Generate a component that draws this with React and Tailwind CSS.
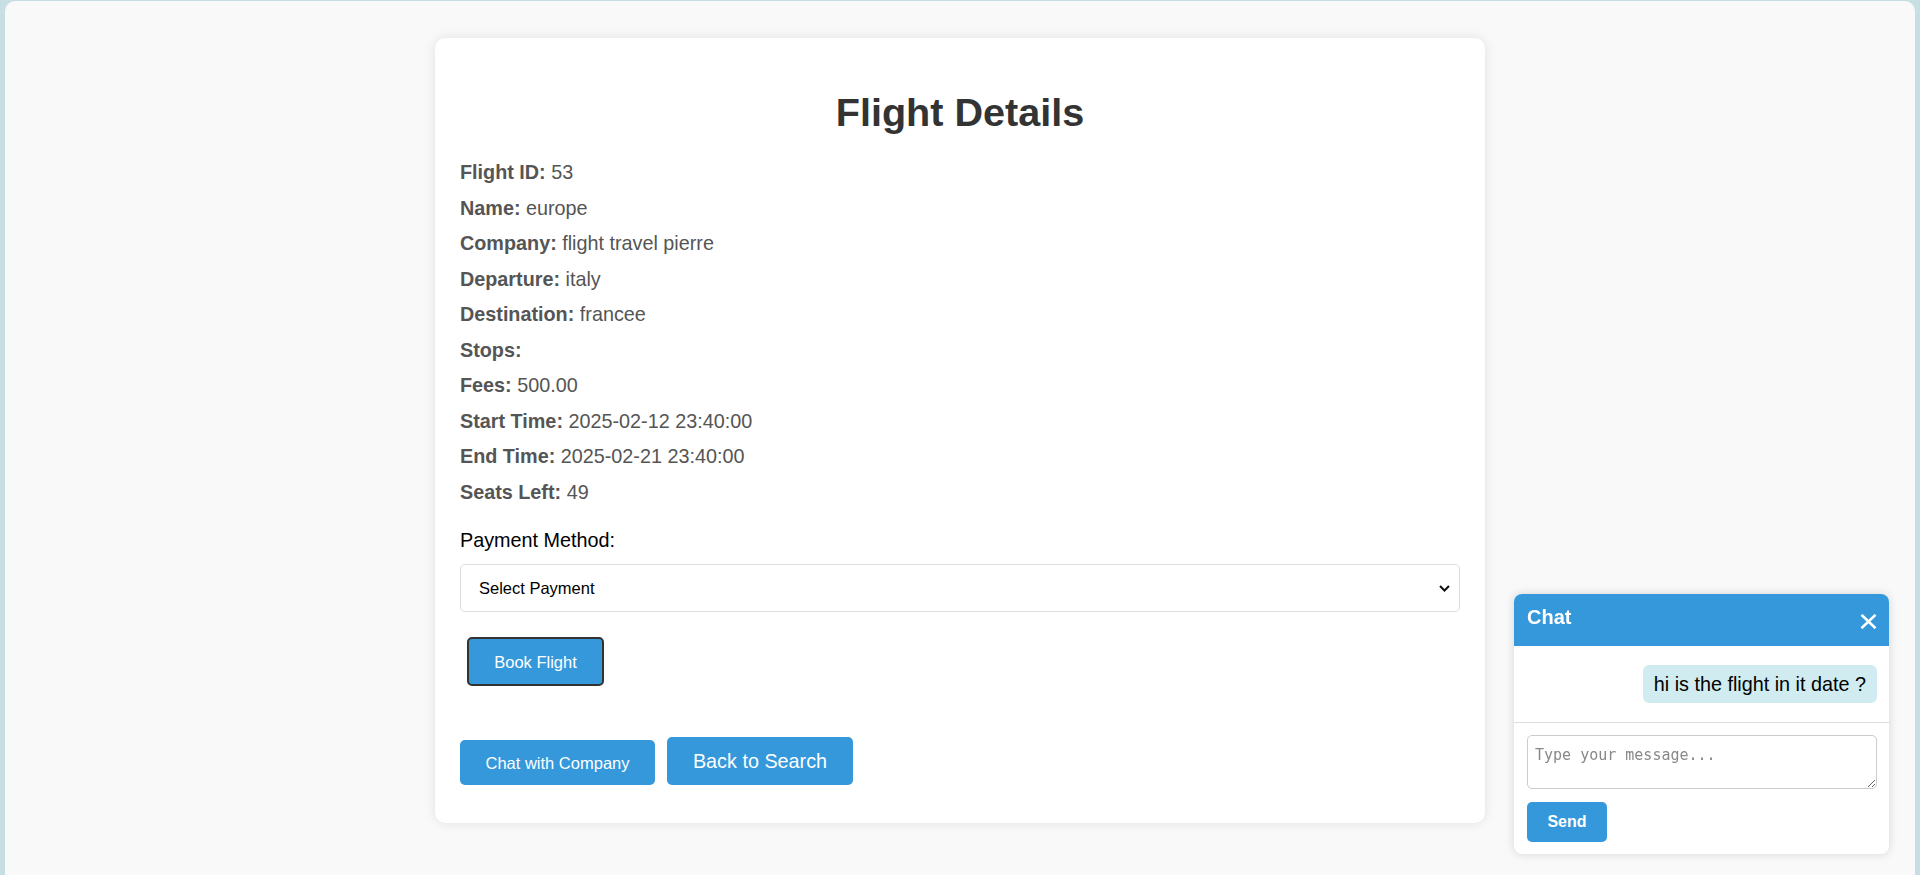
import React from 'react';

const DETAILS = [
  ['Flight ID:', '53'],
  ['Name:', 'europe'],
  ['Company:', 'flight travel pierre'],
  ['Departure:', 'italy'],
  ['Destination:', 'francee'],
  ['Stops:', ''],
  ['Fees:', '500.00'],
  ['Start Time:', '2025-02-12 23:40:00'],
  ['End Time:', '2025-02-21 23:40:00'],
  ['Seats Left:', '49'],
];

function ChatBox() {
  return (
    <div className="fixed right-[31px] bottom-[21px] w-[375px] bg-white rounded-[8px] shadow-[0_0_10px_rgba(0,0,0,0.15)] overflow-hidden">
      <div className="h-[52px] bg-[#3498db] flex items-center justify-between pl-[13px] pr-[12px]">
        <span className="text-white text-[20px] font-bold leading-[23px] mb-[6px]">Chat</span>
        <svg width="17" height="15" viewBox="0 0 17 15" className="mt-[2px]">
          <path d="M1.5 0.8 L15.5 14.2 M15.5 0.8 L1.5 14.2" stroke="#fff" strokeWidth="2.6" fill="none" />
        </svg>
      </div>

      <div className="flex justify-end px-[12px] py-[19px] border-b border-[#ddd]">
        <div className="h-[38px] px-[11px] flex items-center bg-[#d1ecf1] rounded-[6px] text-black text-[19.8px] leading-[23px]">
          hi is the flight in it date ?
        </div>
      </div>

      <div className="pl-[13px] pr-[12px] pt-[12px] pb-[12px]">
        <textarea
          className="block w-full h-[54px] border border-[#ccc] rounded-[5px] pl-[7px] pt-[8px] text-[15px] placeholder-[#888] resize-y outline-none"
          style={{ fontFamily: '"DejaVu Sans Mono", "Liberation Mono", monospace' }}
          placeholder="Type your message..."
        />
        <button className="mt-[13px] w-[80px] h-[40px] bg-[#3498db] text-white text-[16px] font-bold rounded-[5px]">
          Send
        </button>
      </div>
    </div>
  );
}

export default function App() {
  return (
    <div className="min-h-screen bg-[#c7dfe3] px-[5px] pt-px" style={{ fontFamily: '"Liberation Sans", Arial, sans-serif' }}>
      <div className="min-h-[874px] bg-[#f9f9f9] rounded-t-[10px] pt-[37px]">
        <div className="mx-auto w-[1050px] bg-white rounded-[10px] shadow-[0_0_12px_rgba(0,0,0,0.1)] px-[25px] pt-[25px] pb-[38px]">
          <h1 className="mt-[26px] mb-[20px] text-center text-[39.6px] leading-[46px] font-bold text-[#333]">
            Flight Details
          </h1>

          <div className="text-[19.8px] leading-[35.55px] text-[#555]">
            {DETAILS.map(([label, value]) => (
              <div key={label}>
                <span className="font-bold">{label}</span> {value}
              </div>
            ))}
          </div>

          <div className="mt-[19px] text-[19.8px] leading-[23px] text-black">Payment Method:</div>

          <div className="relative mt-[12px]">
            <select className="appearance-none block w-full h-[48px] border border-[#ddd] rounded-[5px] bg-white pl-[18px] text-[16.5px] text-black outline-none">
              <option>Select Payment</option>
              <option>Credit Card</option>
              <option>PayPal</option>
            </select>
            <svg width="11" height="7" viewBox="0 0 11 7" className="absolute right-[10px] top-[21px] pointer-events-none">
              <path d="M1 1 L5.5 5.5 L10 1" stroke="#111" strokeWidth="2" fill="none" />
            </svg>
          </div>

          <button className="mt-[25px] ml-[7px] w-[137px] h-[49px] border-2 border-[#333] rounded-[5px] bg-[#3498db] text-white text-[16.5px]">
            Book Flight
          </button>

          <div className="mt-[51px] flex items-end gap-[12px]">
            <button className="w-[195px] h-[45px] rounded-[5px] bg-[#3498db] text-white text-[16.5px]">
              Chat with Company
            </button>
            <button className="w-[186px] h-[48px] rounded-[5px] bg-[#3498db] text-white text-[19.8px]">
              Back to Search
            </button>
          </div>
        </div>
      </div>

      <ChatBox />
    </div>
  );
}
